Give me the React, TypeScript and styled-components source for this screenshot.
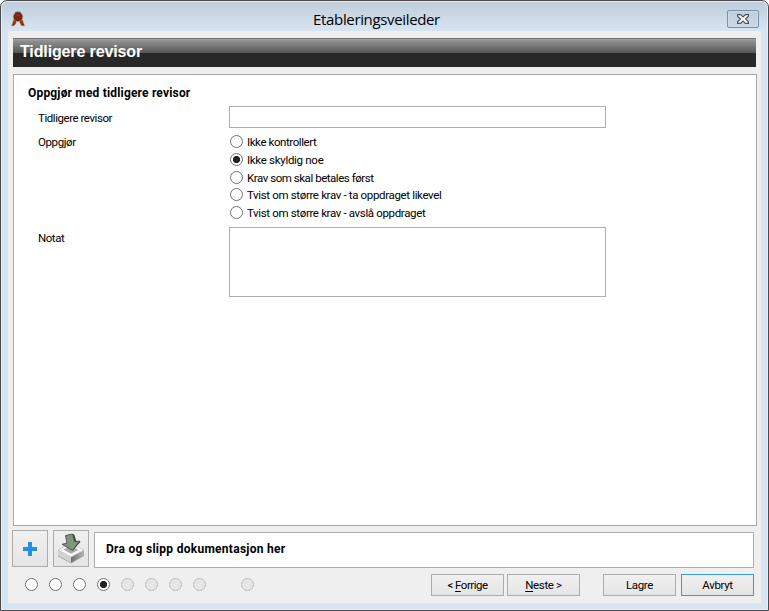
import React from "react";
import styled, { createGlobalStyle, css } from "styled-components";

const GlobalStyle = createGlobalStyle`
  * { box-sizing: border-box; }
  html, body { margin: 0; background: #fff; overflow: hidden; }
`;

const Window = styled.div`
  width: 769px;
  height: 611px;
  border: 1px solid #4b4a4e;
  border-radius: 7px 7px 0 0;
  box-shadow: inset 0 0 0 1px #e6edf6;
  background: linear-gradient(#bfccda 0, #d7e4f2 30px);
  padding: 1px 7px 7px;
  font: 11.5px/14px Roboto, "Liberation Sans", sans-serif;
  color: #000;
`;

const TitleBar = styled.header`
  height: 29px;
  display: grid;
  grid-template-columns: 40px 1fr 40px;
  align-items: start;
`;

const TitleIcon = styled.svg`
  display: block;
  margin: 9px 0 0 2px;
`;

const Title = styled.h1`
  margin: 7px 0 0;
  padding-right: 16px;
  text-align: center;
  font: 15px/20px "Open Sans", "Noto Sans", sans-serif;
  letter-spacing: -0.35px;
`;

const CloseButton = styled.button`
  justify-self: end;
  width: 32px;
  height: 18px;
  margin: 8px 2px 0 0;
  padding: 0;
  display: flex;
  align-items: center;
  justify-content: center;
  border: 1px solid #7690b0;
  border-radius: 2px;
  background: linear-gradient(#c0cddb, #cbd8e7);
  box-shadow: inset 0 0 0 1px #cfdae8;
`;

const Body = styled.main`
  height: 572px;
  background: #efefef;
  padding: 7px 4px 0;
`;

const Heading = styled.h2`
  width: 743px;
  height: 29px;
  margin: 0 0 7px 1px;
  padding-left: 7px;
  font: bold 16px/27px "Liberation Sans", Arial, sans-serif;
  letter-spacing: -0.13px;
  color: #fff;
  background: linear-gradient(#747474 0, #747474 1px, #a1a1a1 1px, #909090 3px, #565656 15px, #282828 15px, #282828 100%);
`;

const Panel = styled.section`
  width: 744px;
  height: 452px;
  margin-left: 1px;
  padding: 11px 0 0 14px;
  border: 1px solid #a9a9ad;
  background: #fff;
`;

const SectionTitle = styled.h3`
  margin: 0;
  height: 20px;
  font-size: 12px;
  line-height: 14px;
  font-weight: 700;
  letter-spacing: 0.18px;
`;

const Row = styled.div<{ $height: number }>`
  display: grid;
  grid-template-columns: 201px 377px;
  height: ${(p) => p.$height}px;
`;

const Label = styled.label<{ $top: number; $spacing?: number }>`
  padding: ${(p) => p.$top}px 0 0 10px;
  letter-spacing: ${(p) => p.$spacing ?? 0}px;
`;

const field = css`
  display: block;
  width: 377px;
  margin: 0;
  padding: 2px 4px;
  border: 1px solid #abadb3;
  border-radius: 0;
  background: #fff;
  outline: none;
  resize: none;
`;
const TextInput = styled.input`${field} height: 22px;`;
const TextArea = styled.textarea`${field} height: 70px;`;

const Options = styled.div`
  display: grid;
  grid-template-rows: 18px 18px 17px 18px 18px;
  padding: 0 0 0 1px;
`;

const Option = styled.label<{ $spacing: number }>`
  display: flex;
  align-items: flex-start;
  gap: 4px;
  letter-spacing: ${(p) => p.$spacing}px;
  white-space: nowrap;
`;

const Radio = styled.input.attrs({ type: "radio" })`
  appearance: none;
  flex: none;
  width: 13px;
  height: 13px;
  margin: 0;
  border: 1px solid #707070;
  border-radius: 50%;
  background: #fff;
  &:checked { background: radial-gradient(circle, #222 3.2px, #fff 4px); }
  &:disabled { border-color: #bcbcbc; background: #e6e6e6; }
`;

const Documents = styled.div`
  display: flex;
  align-items: flex-start;
  gap: 5px;
  margin-top: 4px;
  height: 38px;
`;

const IconButton = styled.button`
  width: 36px;
  height: 37px;
  padding: 0;
  display: flex;
  align-items: center;
  justify-content: center;
  border: 1px solid #acacac;
  background: linear-gradient(#f0f0f0, #e5e5e5);
`;

const DropZone = styled.div`
  width: 660px;
  height: 36px;
  margin-top: 2px;
  padding-left: 11px;
  border: 1px solid #acacac;
  background: #fff;
  font-size: 12px;
  font-weight: 700;
  line-height: 32px;
  letter-spacing: 0.28px;
`;

const Footer = styled.footer`
  display: flex;
  align-items: flex-start;
  margin-top: 6px;
  padding-left: 13px;
`;

const Steps = styled.div`
  display: flex;
  gap: 11px;
  padding-top: 4px;
  width: 406px;
  ${Radio}:last-child { margin-left: 24px; }
`;

const Button = styled.button<{ $before?: number; $primary?: boolean; $spacing?: number }>`
  width: 73px;
  height: 22px;
  padding: 0;
  margin-left: ${(p) => p.$before ?? 0}px;
  border: 1px solid ${(p) => (p.$primary ? "#3c94e6" : "#acacac")};
  background: linear-gradient(#f0f0f0, #e5e5e5);
  color: #000;
  font: inherit;
  letter-spacing: ${(p) => p.$spacing ?? -0.35}px;
`;

const Accel = styled.span`
  text-decoration: underline;
  text-underline-offset: 2px;
`;

const options = [
  { text: "Ikke kontrollert", spacing: -0.42 },
  { text: "Ikke skyldig noe", spacing: -0.3 },
  { text: "Krav som skal betales først", spacing: -0.46 },
  { text: "Tvist om større krav - ta oppdraget likevel", spacing: -0.35 },
  { text: "Tvist om større krav - avslå oppdraget", spacing: -0.35 },
];

const RosetteIcon = () => (
  <TitleIcon width="16" height="16" viewBox="0 0 16 16">
    <path d="M4 7 2 13l-1 2h3l2-2.500 1-3h2l1 3 1.500 2.500H15l-1-2.500L12 7Z" fill="#7c2416" stroke="#dfc19b" strokeWidth=".8" />
    <circle cx="8" cy="5.800" r="4.800" fill="#792413" stroke="#c89e77" strokeWidth=".6" />
    <path d="M5 2C6.500.8 9.500.8 11 2.200" stroke="#4d4547" fill="none" />
    <path d="M6 5.500c1-2 3-2 4-.5M5 9.500l-1.500 4M11 9.500l1.300 3.500" stroke="#a43f22" fill="none" />
  </TitleIcon>
);

const CloseIcon = () => (
  <svg width="12" height="10" viewBox="0 0 12 10">
    <path d="M.6.6h3L6 3 8.400.6h3v1.700L8.600 5l2.800 2.700v1.700h-3L6 7 3.600 9.400h-3V7.700L3.400 5 .6 2.300Z" fill="#fff" stroke="#4c555e" strokeWidth="1.200" />
  </svg>
);

const PlusIcon = () => (
  <svg width="14" height="14" viewBox="0 0 14 14">
    <path d="M5 0h4v5h5v4H9v5H5V9H0V5h5Z" fill="#2590dc" />
  </svg>
);

const InboxIcon = () => (
  <svg width="28" height="31" viewBox="0 0 28 31">
    <defs>
      <linearGradient id="traySide" x1="0" x2="1">
        <stop offset="0" stopColor="#6f6f6f" />
        <stop offset="1" stopColor="#b4b4b4" />
      </linearGradient>
    </defs>
    <path d="M1 17 14 24v6L1 23Z" fill="#d2d2d2" />
    <path d="m14 24 13-7v5.500L14 30Z" fill="url(#traySide)" />
    <path d="M1 17 13 10.500 27 17 14 24Z" fill="#f8f8f8" stroke="#b5b5b5" strokeWidth=".6" />
    <path d="m6.500 16.500 7-3.500 8 3.700-7.500 4Z" fill="#a9a9a9" />
    <path d="m1 23 13 7 13-7.500" fill="none" stroke="#8a8a8a" strokeWidth=".6" />
    <path d="M8.500 2.500 15.500 1l2.200 7.700 4.800-.7L15.500 17.500 5 11.200l5-.9Z" fill="#7f957c" stroke="#465443" strokeWidth=".9" />
    <path d="m15.500 1 1.700.6 2.300 6.800-1.800.3ZM22.500 8l1 .8-8 9.200v-.5Z" fill="#384833" />
  </svg>
);

export default function App() {
  return (
    <>
      <GlobalStyle />
      <Window>
        <TitleBar>
          <RosetteIcon />
          <Title>Etableringsveileder</Title>
          <CloseButton aria-label="Lukk"><CloseIcon /></CloseButton>
        </TitleBar>
        <Body>
          <Heading>Tidligere revisor</Heading>
          <Panel>
            <SectionTitle>Oppgjør med tidligere revisor</SectionTitle>
            <Row $height={29}>
              <Label $top={5} $spacing={-0.45}>Tidligere revisor</Label>
              <TextInput aria-label="Tidligere revisor" />
            </Row>
            <Row $height={92}>
              <Label as="div" $top={0} $spacing={-0.4}>Oppgjør</Label>
              <Options>
                {options.map((o, i) => (
                  <Option key={o.text} $spacing={o.spacing}>
                    <Radio name="oppgjor" defaultChecked={i === 1} />
                    {o.text}
                  </Option>
                ))}
              </Options>
            </Row>
            <Row $height={70}>
              <Label $top={4} $spacing={-0.45}>Notat</Label>
              <TextArea aria-label="Notat" />
            </Row>
          </Panel>
          <Documents>
            <IconButton aria-label="Legg til"><PlusIcon /></IconButton>
            <IconButton aria-label="Hent"><InboxIcon /></IconButton>
            <DropZone>Dra og slipp dokumentasjon her</DropZone>
          </Documents>
          <Footer>
            <Steps>
              {Array.from({ length: 9 }, (_, i) => (
                <Radio key={i} name="steg" defaultChecked={i === 3} disabled={i > 3} />
              ))}
            </Steps>
            <Button $spacing={-0.5}>&lt; <Accel>F</Accel>orrige</Button>
            <Button $before={3}><Accel>N</Accel>este &gt;</Button>
            <Button $before={23}>Lagre</Button>
            <Button $before={5} $primary>Avbryt</Button>
          </Footer>
        </Body>
      </Window>
    </>
  );
}
